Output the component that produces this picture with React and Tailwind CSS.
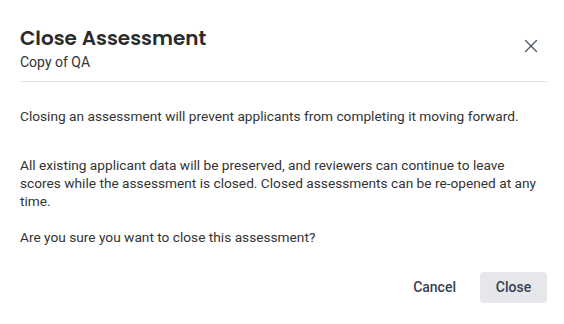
import { X } from "lucide-react";

const CloseAssessmentDialog = () => {
  return (
    <div className="h-[324px] w-[564px] bg-white pl-5 pr-[17px] font-['Roboto',sans-serif] text-[#333333]">
      <div className="flex items-start justify-between border-b border-[#e4e4e4] pt-[25px] pb-[9px]">
        <div>
          <h2 className="font-['Poppins','Inter',sans-serif] text-[20px] font-semibold leading-[26px] text-[#2b2b2b]">
            Close Assessment
          </h2>
          <p className="mt-[1px] text-[14px] leading-[20px]">Copy of QA</p>
        </div>
        <button className="mt-[10px] mr-[5px] text-[#4b5563]">
          <X size={22} strokeWidth={1.4} />
        </button>
      </div>
      <div className="pt-[25px] text-[13.7px] leading-[18px]">
        <p>Closing an assessment will prevent applicants from completing it moving forward.</p>
        <p className="mt-[31px]">
          All existing applicant data will be preserved, and reviewers can continue to leave scores while the assessment
          is closed. Closed assessments can be re-opened at any time.
        </p>
        <p className="mt-[18px]">Are you sure you want to close this assessment?</p>
      </div>
      <div className="mt-[26px] flex justify-end gap-[8px]">
        <button className="h-[31px] rounded-[4px] px-[16px] text-[14px] font-medium text-[#374151]">Cancel</button>
        <button className="h-[31px] w-[67px] rounded-[4px] bg-[#e5e7eb] text-[14px] font-medium text-[#374151]">
          Close
        </button>
      </div>
    </div>
  );
};

export default function App() {
  return <CloseAssessmentDialog />;
}
